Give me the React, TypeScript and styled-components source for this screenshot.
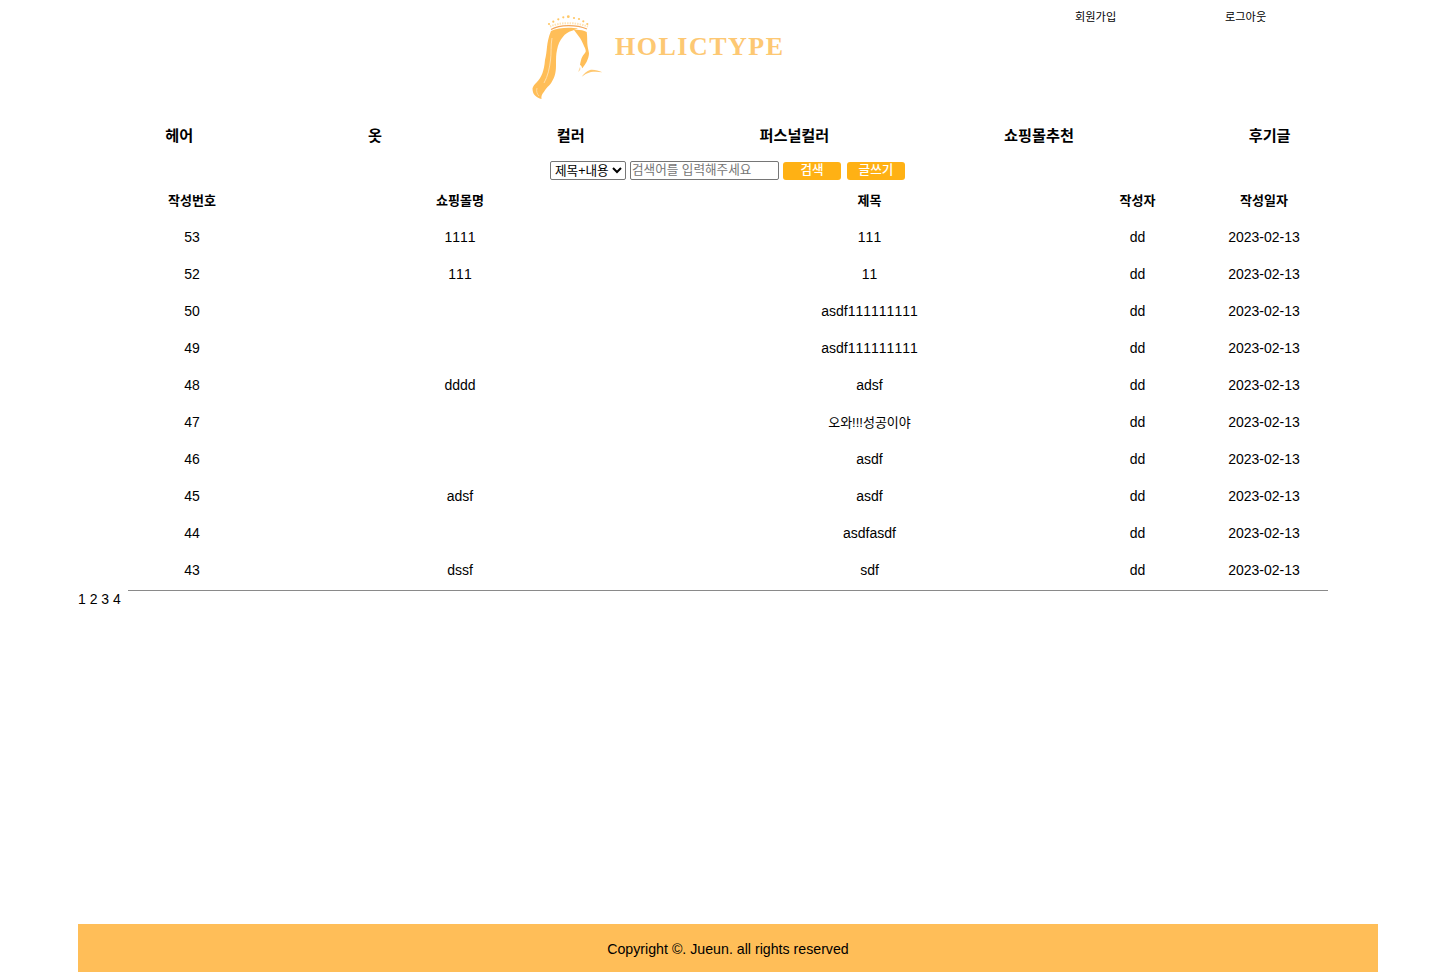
import React from "react";
import styled, { createGlobalStyle } from "styled-components";

const Global = createGlobalStyle`
  html, body { margin: 0; padding: 0; background: #fff; }
  body {
    font-family: "Liberation Sans", "Noto Sans CJK KR", sans-serif;
    color: #000;
    font-kerning: none;
  }
`;

const Page = styled.div`
  width: 1300px;
  min-height: 972px;
  margin-left: 78px;
  display: flex;
  flex-direction: column;
`;

const Header = styled.header`
  height: 113px;
  display: flex;
  align-items: flex-start;
`;

const LogoLink = styled.a`
  display: flex;
  align-items: flex-start;
  margin-left: 454px;
  width: 543px;
`;

const LogoMark = styled.svg`
  width: 80px;
  height: 90px;
  margin-top: 12px;
  flex: none;
`;

const LogoText = styled.span`
  font-family: "Liberation Serif", serif;
  font-weight: 700;
  font-size: 26px;
  line-height: 30px;
  letter-spacing: 1.5px;
  color: #fdc873;
  font-kerning: normal;
  margin: 32px 0 0 3px;
`;

const AuthLink = styled.a`
  width: 150px;
  font-size: 11.2px;
  line-height: 14px;
  margin-top: 10px;
  color: #000;
`;

const Nav = styled.nav`
  height: 42px;
  box-sizing: border-box;
  padding-top: 3px;
  display: flex;
  justify-content: space-around;
  align-items: center;
`;

const NavItem = styled.a`
  font-size: 15.2px;
  line-height: 20px;
  font-weight: 700;
  color: #000;
`;

const SearchBar = styled.form`
  height: 28px;
  box-sizing: border-box;
  display: flex;
  align-items: center;
  margin: 0;
  padding: 3px 0 0 472px;
`;

const Select = styled.select`
  width: 76px;
  height: 19px;
  padding: 0;
  font-family: "Liberation Sans", "Noto Sans CJK KR", sans-serif;
  font-size: 12.6px;
  border: 1px solid #767676;
  border-radius: 2px;
  background: #fff;
  color: #000;
`;

const SearchInput = styled.input`
  width: 149px;
  height: 19px;
  box-sizing: border-box;
  margin-left: 4px;
  padding: 0 1px 1px;
  font-family: "Liberation Sans", "Noto Sans CJK KR", sans-serif;
  font-size: 12.6px;
  border: 1px solid #767676;
  border-radius: 2px;
  &::placeholder { color: #757575; }
`;

const OrangeButton = styled.button<{ $gap: number }>`
  width: 58px;
  height: 18px;
  margin: 1px 0 0 ${p => p.$gap}px;
  padding: 0 0 2px;
  border: none;
  border-radius: 3px;
  background: #ffb114;
  color: #fff;
  font-family: "Liberation Sans", "Noto Sans CJK KR", sans-serif;
  font-size: 12.6px;
  font-weight: 500;
  line-height: 16px;
`;

const Table = styled.table`
  width: 1200px;
  margin-left: 50px;
  border-collapse: separate;
  border-spacing: 0;
  table-layout: fixed;
  border-bottom: 1px solid #8a8a8a;
`;

const Th = styled.th<{ $w: number }>`
  width: ${p => p.$w}px;
  height: 37px;
  box-sizing: border-box;
  padding: 0 0 4px;
  font-size: 13px;
  font-weight: 700;
  text-align: center;
`;

const Td = styled.td`
  height: 37px;
  box-sizing: border-box;
  padding: 0 0 4px;
  font-size: 14px;
  text-align: center;
`;

const Korean = styled.span`
  font-size: 13px;
`;

const Pager = styled.div`
  font-size: 14px;
  line-height: 16px;
`;

const Spacer = styled.div`
  flex: 1;
`;

const Footer = styled.footer`
  height: 48px;
  background: #ffbe58;
  display: flex;
  align-items: center;
  justify-content: center;
  font-size: 14.2px;
  padding-top: 2px;
  box-sizing: border-box;
`;

const columns = [
  { label: "작성번호", w: 128 },
  { label: "쇼핑몰명", w: 408 },
  { label: "제목", w: 411 },
  { label: "작성자", w: 125 },
  { label: "작성일자", w: 128 },
];

const rows: [string, string, React.ReactNode][] = [
  ["53", "1111", "111"],
  ["52", "111", "11"],
  ["50", "", "asdf111111111"],
  ["49", "", "asdf111111111"],
  ["48", "dddd", "adsf"],
  ["47", "", <Korean>오와!!!성공이야</Korean>],
  ["46", "", "asdf"],
  ["45", "adsf", "asdf"],
  ["44", "", "asdfasdf"],
  ["43", "dssf", "sdf"],
];

const navItems = ["헤어", "옷", "컬러", "퍼스널컬러", "쇼핑몰추천", "후기글"];

const crown = [
  [17, 12],
  [21.3, 9.7],
  [26.3, 7.3],
  [31.3, 5.3],
  [36.3, 4.7],
  [42, 6],
  [47, 7],
  [51.3, 9.3],
  [55.3, 12],
];

const Mark = () => (
  <LogoMark viewBox="0 0 80 90">
    <g fill="#ffbe58">
      <path d="M19 19 C16.5 25 15.5 30 15 35 C14.5 40 14 44 13 48 C12.5 54 11.5 58 10.5 61 C9 65 7 68 5 70 C3 72 1 74 0.5 76.3 C0.5 79 1 82 3 83.5 C5 85.5 7 86.5 9.5 87 C9 84 10 82 12 79.7 C14 76 17 74 19 71.3 C21 68 22.5 65 23.3 61.3 C24 58 24 55 24 51.3 C24 47 24 42 25 38 C26 32 28 28 31 24.7 C33 22 36 20 40 18.7 L46 16.5 C38 15 26 15.5 19 19 Z" />
      <path d="M42 18 C44 21 46 23 48 26 C50 29 51 32 52.3 34.7 C53 36 54 38 53.7 39.7 C53 41.5 51 43 50.3 44.7 C49 47 48.5 50 48 53 C49.5 53 50 56 50.3 56.3 C52 54 53.5 52 54.7 49.7 C56 47 57 44 57 41.3 C56.5 38 55.5 35 55.3 31.3 C55.2 28 55.3 24 54.7 20 C51 18 46 17.5 42 18 Z" />
      <path d="M49.7 64.7 C52 61.5 55 59 58 58 C62 57.5 66.5 58.5 70.3 60.3 C66 59.5 62 59.5 59 60 C55 61 52 63 49.7 64.7 Z" opacity="0.85" />
      <path d="M48 55 C49 57 48 59 46 60 C47 58 47 57 48 55 Z" opacity="0.6" />
    </g>
    <path d="M20 26 C18.5 34 19.5 42 18.5 48 C17.5 56 16 64 12 71" fill="none" stroke="#ffe0ac" strokeWidth="1" />
    <path d="M5 76 C4 79 5 82 7 84" fill="none" stroke="#ffe0ac" strokeWidth="0.8" />
    <path d="M19 17.5 C28 12.5 44 12.5 55 17" fill="none" stroke="#f2a65a" strokeWidth="1.2" />
    <path d="M18 14.5 C28 10 44 10 56 14.5" fill="none" stroke="#ffe4b5" strokeWidth="2" strokeDasharray="1.5 1" />
    <g fill="#ffc766">
      {crown.map(([cx, cy], i) => (
        <circle key={i} cx={cx} cy={cy} r={i === 4 ? 1.4 : 1.1} />
      ))}
    </g>
  </LogoMark>
);

export default function App() {
  return (
    <Page>
      <Global />
      <Header>
        <LogoLink>
          <Mark />
          <LogoText>HOLICTYPE</LogoText>
        </LogoLink>
        <AuthLink>회원가입</AuthLink>
        <AuthLink>로그아웃</AuthLink>
      </Header>
      <Nav>
        {navItems.map(n => (
          <NavItem key={n}>{n}</NavItem>
        ))}
      </Nav>
      <SearchBar>
        <Select defaultValue="a">
          <option value="a">제목+내용</option>
        </Select>
        <SearchInput placeholder="검색어를 입력해주세요" />
        <OrangeButton type="button" $gap={4}>검색</OrangeButton>
        <OrangeButton type="button" $gap={6}>글쓰기</OrangeButton>
      </SearchBar>
      <Table>
        <thead>
          <tr>
            {columns.map(c => (
              <Th key={c.label} $w={c.w}>{c.label}</Th>
            ))}
          </tr>
        </thead>
        <tbody>
          {rows.map(r => (
            <tr key={r[0]}>
              <Td>{r[0]}</Td>
              <Td>{r[1]}</Td>
              <Td>{r[2]}</Td>
              <Td>dd</Td>
              <Td>2023-02-13</Td>
            </tr>
          ))}
        </tbody>
      </Table>
      <Pager>1 2 3 4</Pager>
      <Spacer />
      <Footer>Copyright ©. Jueun. all rights reserved</Footer>
    </Page>
  );
}
